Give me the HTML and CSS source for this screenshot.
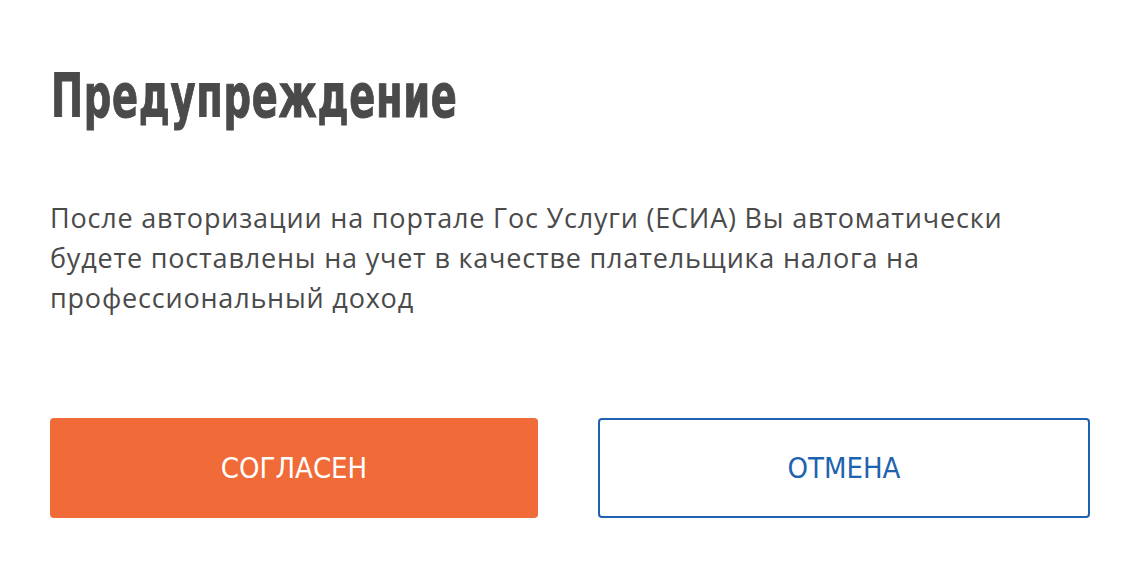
FILE: index.html
```html
<!DOCTYPE html>
<html lang="ru">
<head>
<meta charset="utf-8">
<link rel="stylesheet" href="styles.css">
</head>
<body>
<div class="dialog">
  <h1 class="title"><span class="title-text">Предупреждение</span></h1>
  <p class="text">После авторизации на портале Гос Услуги (ЕСИА) Вы автоматически будете поставлены на учет в качестве плательщика налога на профессиональный доход</p>
  <div class="actions">
    <button class="btn btn-primary">СОГЛАСЕН</button>
    <button class="btn btn-outline">ОТМЕНА</button>
  </div>
</div>
</body>
</html>
```
FILE: styles.css
```css
html, body {
  margin: 0;
  padding: 0;
  background: #ffffff;
}
.dialog {
  width: 1040px;
  padding: 56px 50px 0 50px;
  box-sizing: content-box;
}
.title {
  margin: 0;
  font-family: "DejaVu Sans Condensed", "Liberation Sans", sans-serif;
  font-weight: 700;
  font-size: 61px;
  line-height: 80px;
  color: #4a4a4a;
  white-space: nowrap;
}
.title-text {
  display: inline-block;
  letter-spacing: 1px;
  -webkit-text-stroke: 1px #4a4a4a;
  transform: scaleX(0.7);
  transform-origin: left center;
  margin-left: 1px;
}
.text {
  margin: 62px 0 0 0;
  font-family: "Open Sans", "Liberation Sans", sans-serif;
  font-size: 27px;
  letter-spacing: 0.8px;
  line-height: 40px;
  color: #4a4a4a;
  width: 1000px;
}
.actions {
  display: flex;
  gap: 60px;
  margin-top: 100px;
}
.btn {
  flex: 1;
  height: 100px;
  border-radius: 4px;
  font-family: "DejaVu Sans Condensed", "Open Sans", sans-serif;
  font-size: 29px;
  cursor: pointer;
  box-sizing: border-box;
}
.btn-primary {
  background: #f06b38;
  color: #ffffff;
  border: none;
}
.btn-outline {
  background: #ffffff;
  color: #1d63b0;
  border: 2px solid #1d63b0;
}
```
